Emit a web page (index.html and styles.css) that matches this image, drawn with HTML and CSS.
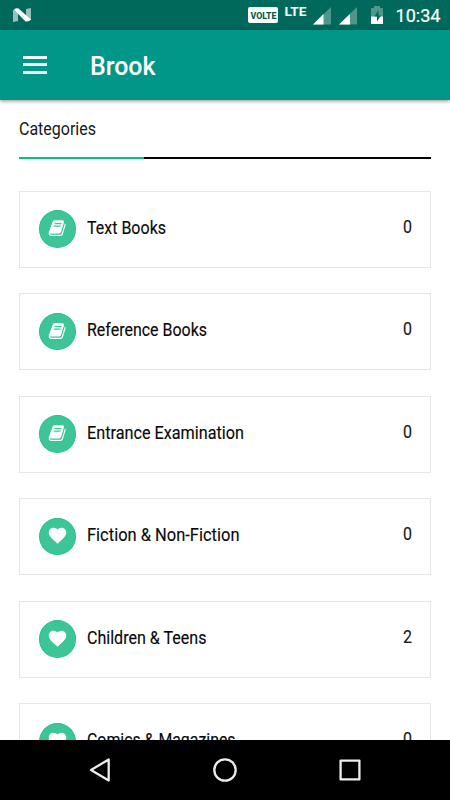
FILE: index.html
```html
<!DOCTYPE html>
<html lang="en">
<head>
<meta charset="utf-8">
<title>Brook</title>
<link rel="stylesheet" href="styles.css">
</head>
<body>
<svg class="defs">
  <symbol id="book" viewBox="0 0 1792 1792"><path d="M1703 478q40 57 18 129l-275 906q-19 64-76.5 107.5t-122.5 43.5h-923q-77 0-148.5-53.5t-99.5-131.5q-24-67-2-127 0-4 3-27t4-37q1-8-3-21.5t-3-19.5q2-11 8-21t16.500-23.500 16.500-23.500q23-38 45-91.500t30-91.500q3-10 .5-30t-.5-28q3-11 17-28t17-23q21-36 42-92t25-90q1-9-2.500-32t.5-28q4-13 22-30.500t22-22.500q19-26 42.500-84.500t27.500-96.500q1-8-3-25.500t-2-26.500q2-8 9-18t18-23 17-21q8-12 16.500-30.500t15-35 16-36 19.500-32 26.500-23.500 36-11.500 47.500 5.500l-1 3q38-9 51-9h761q74 0 114 56t18 130l-274 906q-36 119-71.500 153.500t-128.500 34.500h-869q-27 0-38 15-11 16-1 43 24 70 144 70h923q29 0 56-15.500t35-41.500l300-987q7-22 5-57 38 15 59 43zm-1064 2q-4 13 2 22.500t20 9.500h608q13 0 25.500-9.500t16.500-22.500l21-64q4-13-2-22.500t-20-9.500h-608q-13 0-25.500 9.500t-16.500 22.500zm-83 256q-4 13 2 22.500t20 9.500h608q13 0 25.500-9.500t16.500-22.500l21-64q4-13-2-22.500t-20-9.500h-608q-13 0-25.500 9.500t-16.500 22.500z"/></symbol>
  <symbol id="heart" viewBox="0 0 24 24"><path d="M12 21.350l-1.450-1.320C5.400 15.360 2 12.280 2 8.500 2 5.420 4.420 3 7.500 3c1.740 0 3.410.81 4.500 2.090C13.090 3.810 14.760 3 16.500 3 19.580 3 22 5.420 22 8.500c0 3.780-3.400 6.860-8.550 11.540L12 21.350z"/></symbol>
</svg>
<div class="screen">
  <div class="status">
    <svg class="nougat" width="20" height="16" viewBox="0 0 20 16"><path d="M1 3l5-1v12l-5 1zM14 2l5-1v12l-5 1z" fill="#96c0ba"/><path d="M2 2.500Q4 .5 6.500 1.500L19 12.500q-2 2.500-5.500 2z" fill="#fff"/></svg>
    <svg class="system" width="202" height="30" viewBox="248 0 202 30">
      <rect x="248" y="7" width="30" height="16" rx="2" fill="#fff"/>
      <text class="volte" x="250.500" y="18.500" textLength="26" lengthAdjust="spacingAndGlyphs">VOLTE</text>
      <text class="lte" x="284.500" y="16" textLength="22" lengthAdjust="spacingAndGlyphs">LTE</text>
      <path d="M313 24.500L331 7v17.500zM339 24.500L357 7v17.500z" fill="#4f968c"/>
      <path d="M313 24.500L323.500 14v10.500zM339 24.500L350 14v10.500z" fill="#fff"/>
      <path d="M371 8h3V6h6v2h3v9h-12z" fill="#4f968c"/><path d="M371 16.500h12V24h-12z" fill="#fff"/>
      <path d="M378.500 10l-4 6.500h2.500v5l4-6h-2.500z" fill="#00695c"/>
      <text class="clock" x="395.500" y="22" textLength="45" lengthAdjust="spacingAndGlyphs">10:34</text>
    </svg>
  </div>
  <header class="appbar">
    <div class="menu"><i></i><i></i><i></i></div>
    <svg class="brand" width="80" height="36"><text x="0" y="27.500" textLength="65.500" lengthAdjust="spacingAndGlyphs">Brook</text></svg>
  </header>
  <main>
    <svg class="heading" width="200" height="30"><text x="0" y="21.300" textLength="77" lengthAdjust="spacingAndGlyphs">Categories</text></svg>
    <div class="rule"><div class="active"></div></div>
    <div class="list">
      <div class="card"><span class="badge"><svg class="book"><use href="#book"/></svg></span><svg class="label"><text x="0" y="21" textLength="79" lengthAdjust="spacingAndGlyphs">Text Books</text></svg><svg class="count"><text x="0" y="20" textLength="9" lengthAdjust="spacingAndGlyphs">0</text></svg></div>
      <div class="card"><span class="badge"><svg class="book"><use href="#book"/></svg></span><svg class="label"><text x="0" y="21" textLength="120" lengthAdjust="spacingAndGlyphs">Reference Books</text></svg><svg class="count"><text x="0" y="20" textLength="9" lengthAdjust="spacingAndGlyphs">0</text></svg></div>
      <div class="card"><span class="badge"><svg class="book"><use href="#book"/></svg></span><svg class="label"><text x="0" y="21" textLength="157" lengthAdjust="spacingAndGlyphs">Entrance Examination</text></svg><svg class="count"><text x="0" y="20" textLength="9" lengthAdjust="spacingAndGlyphs">0</text></svg></div>
      <div class="card"><span class="badge"><svg class="heart"><use href="#heart"/></svg></span><svg class="label"><text x="0" y="21" textLength="152.500" lengthAdjust="spacingAndGlyphs">Fiction &amp; Non-Fiction</text></svg><svg class="count"><text x="0" y="20" textLength="9" lengthAdjust="spacingAndGlyphs">0</text></svg></div>
      <div class="card"><span class="badge"><svg class="heart"><use href="#heart"/></svg></span><svg class="label"><text x="0" y="21" textLength="119.500" lengthAdjust="spacingAndGlyphs">Children &amp; Teens</text></svg><svg class="count"><text x="0" y="20" textLength="9" lengthAdjust="spacingAndGlyphs">2</text></svg></div>
      <div class="card"><span class="badge"><svg class="heart"><use href="#heart"/></svg></span><svg class="label"><text x="0" y="21" textLength="148.500" lengthAdjust="spacingAndGlyphs">Comics &amp; Magazines</text></svg><svg class="count"><text x="0" y="20" textLength="9" lengthAdjust="spacingAndGlyphs">0</text></svg></div>
    </div>
  </main>
  <nav class="navbar">
    <svg width="450" height="60" viewBox="0 0 450 60" fill="none" stroke="#ececec" stroke-width="2.300" stroke-linejoin="round"><path d="M108.700 19.500v21L91 30z"/><circle cx="225" cy="30" r="10.700"/><rect x="340.600" y="20.600" width="18.800" height="18.800"/></svg>
  </nav>
</div>
</body>
</html>
```
FILE: styles.css
```css
* { box-sizing: border-box; }
body { margin: 0; background: #fff; font-family: Roboto, "Liberation Sans", sans-serif; }
svg { display: block; flex: none; }
.defs { display: none; }
.screen { display: flex; flex-direction: column; width: 450px; height: 800px; overflow: hidden; }
.status { flex: none; display: flex; justify-content: space-between; height: 30px; background: #00695c; }
.nougat { margin: 7px 0 0 12px; }
.volte { font-size: 9.5px; font-weight: 800; fill: #00594e; }
.lte { font-size: 13.5px; font-weight: 700; fill: #fff; }
.clock { font-size: 18.500px; fill: #fff; stroke: #fff; stroke-width: .2px; }
.appbar { position: relative; flex: none; display: flex; align-items: center; height: 70px; padding-left: 23px; background: #009788; box-shadow: 0 1px 4px rgba(0, 0, 0, .45); }
.menu { display: flex; flex-direction: column; gap: 4.500px; width: 24px; margin: -1px 43px 0 0; }
.menu i { height: 3px; background: #f4faf9; }
.brand text { font-size: 25.500px; font-weight: 500; fill: #fff; }
main { flex: 1; min-height: 0; overflow: hidden; padding: 14px 19px 0; }
.heading text { font-size: 19px; fill: #171717; }
.heading { height: 43px; }
.rule { height: 2px; background: #050505; }
.active { width: 125px; height: 2px; background: #08bd88; }
.list { display: flex; flex-direction: column; gap: 25.500px; margin-top: 31.600px; }
.card { flex: none; display: flex; align-items: flex-start; height: 77px; border: 1px solid #e5e5e5; }
.badge { display: flex; flex: none; align-items: center; justify-content: center; width: 37px; height: 37.500px; margin: 18.900px 10.500px 0 19px; border: 1px solid #28c191; border-radius: 50%; background: #3dc598; }
.book { width: 18.300px; height: 18.300px; margin-top: -2px; fill: #fff; }
.heart { width: 21px; height: 21px; margin-top: -2px; fill: #fff; }
.label { width: 190px; height: 30px; margin-top: 21px; }
.label text { font-size: 19px; fill: #080808; stroke: #080808; stroke-width: .15px; }
.count { width: 10px; height: 28px; margin: 21px 17.500px 0 auto; }
.count text { font-size: 18.500px; fill: #171717; stroke: #171717; stroke-width: .15px; }
.navbar { flex: none; height: 60px; background: #000; }
```
